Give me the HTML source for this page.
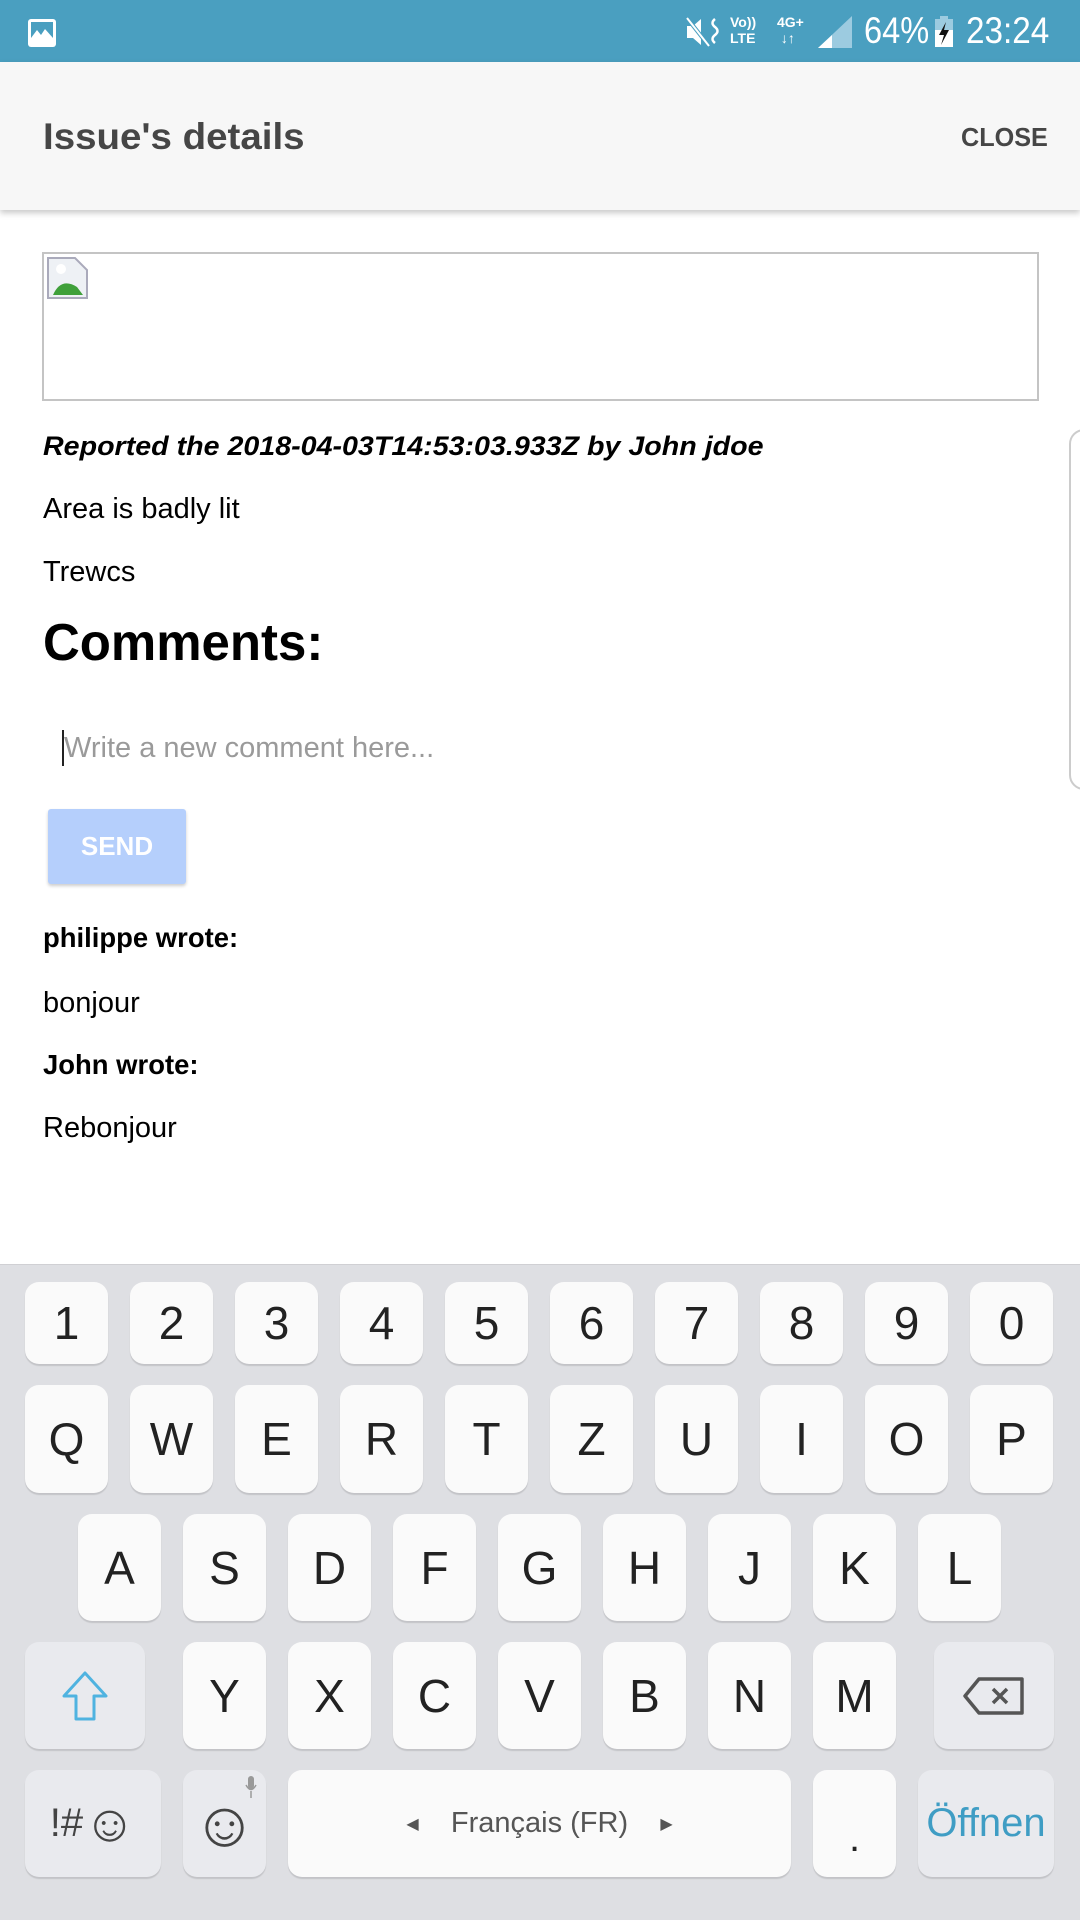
<!DOCTYPE html>
<html><head><meta charset="utf-8"><style>
*{margin:0;padding:0;box-sizing:border-box}
body{width:1080px;height:1920px;position:relative;overflow:hidden;background:#fff;font-family:"Liberation Sans",sans-serif;color:#000}
.a{position:absolute;white-space:nowrap}
.sb{position:absolute;left:0;top:0;width:1080px;height:62px;background:#4a9fc0;color:#fff}
.ab{position:absolute;left:0;top:62px;width:1080px;height:148px;background:#f7f7f7;box-shadow:0 3px 6px rgba(0,0,0,.22)}
.kb{position:absolute;left:0;top:1264px;width:1080px;height:656px;background:#dedfe3;border-top:1px solid #d0d0d4}
.k{position:absolute;background:#fafafa;border-radius:14px;box-shadow:0 2px 1px rgba(0,0,0,.12);display:flex;align-items:center;justify-content:center;font-size:46px;color:#222}
.s{background:#e9eaee}
</style></head><body>
<div class="sb">
 <svg class="a" style="left:27px;top:18px" width="30" height="30" viewBox="0 0 30 30"><rect x="1" y="1" width="28" height="28" rx="3" fill="#fff"/><rect x="4" y="4" width="22" height="16" fill="#4a9fc0"/><path d="M4 20 L10 12 L14 17 L18 11 L26 20Z" fill="#fff"/></svg>
 <svg class="a" style="left:685px;top:16px" width="38" height="32" viewBox="0 0 38 32"><path d="M2 10h6l8-7v26l-8-7H2z" fill="#fff"/><path d="M2 2 L24 30" stroke="#4a9fc0" stroke-width="4"/><path d="M2 2 L24 30" stroke="#fff" stroke-width="2"/><path d="M30 3 q-5 4 0 8 q5 4 0 8 q-5 4 0 8" stroke="#fff" stroke-width="2.5" fill="none"/></svg>
 <div class="a" style="left:730px;top:14px;font-size:14px;font-weight:bold;line-height:16px">Vo))<br>LTE</div>
 <div class="a" style="left:777px;top:14px;font-size:14px;font-weight:bold;line-height:16px">4G+<br>&nbsp;↓↑</div>
 <svg class="a" style="left:818px;top:16px" width="34" height="32" viewBox="0 0 34 32"><path d="M0 32 L34 0 V32Z" fill="#9ccbe0"/><path d="M0 32 L14 19 V32Z" fill="#fff"/></svg>
 <div class="a" style="left:864px;top:10px;font-size:37px;line-height:42px;transform:scaleX(.88);transform-origin:left">64%</div>
 <svg class="a" style="left:934px;top:16px" width="20" height="32" viewBox="0 0 20 32"><rect x="6" y="0" width="8" height="4" fill="#9ccbe0"/><rect x="1" y="3" width="18" height="28" fill="#9ccbe0"/><rect x="1" y="14" width="18" height="17" fill="#fff"/><path d="M12 6 L5 19 H10 L7 29 L15 14 H10Z" fill="#111"/></svg>
 <div class="a" style="left:966px;top:10px;font-size:37px;line-height:42px;transform:scaleX(.9);transform-origin:left">23:24</div>
</div>
<div class="ab">
 <div class="a" style="left:43px;top:54px;font-size:37px;font-weight:bold;color:#464646;line-height:42px;transform:scaleX(1.04);transform-origin:left">Issue's details</div>
 <div class="a" style="left:961px;top:60px;font-size:26px;font-weight:bold;color:#464646;line-height:30px;transform:scaleX(.97);transform-origin:left">CLOSE</div>
</div>
<div class="a" style="left:42px;top:252px;width:997px;height:149px;border:2px solid #c4c4c4"></div>
<svg class="a" style="left:47px;top:257px" width="42" height="42" viewBox="0 0 42 42"><path d="M1 1 H28 L40 13 V41 H1Z" fill="#eef1f5" stroke="#aab" stroke-width="2"/><path d="M6 38 Q14 20 30 30 L36 38Z" fill="#3fa03a"/><circle cx="14" cy="12" r="5" fill="#fff"/></svg>
<div class="a" style="left:43px;top:430px;font-size:27px;font-weight:bold;font-style:italic;line-height:32px;transform:scaleX(1.06);transform-origin:left">Reported the 2018-04-03T14:53:03.933Z by John jdoe</div>
<div class="a" style="left:43px;top:492px;font-size:29px;line-height:34px;transform:scaleX(1.0);transform-origin:left">Area is badly lit</div>
<div class="a" style="left:43px;top:555px;font-size:29px;line-height:34px">Trewcs</div>
<div class="a" style="left:43px;top:613px;font-size:52px;font-weight:bold;line-height:60px;transform:scaleX(.98);transform-origin:left">Comments:</div>
<div class="a" style="left:62px;top:730px;width:2px;height:36px;background:#222"></div>
<div class="a" style="left:64px;top:731px;font-size:29px;color:#9a9a9a;line-height:34px">Write a new comment here...</div>
<div class="a" style="left:48px;top:809px;width:138px;height:75px;background:#b5cffc;border-radius:3px;box-shadow:0 2px 3px rgba(0,0,0,.2);color:#fff;font-size:26px;font-weight:bold;display:flex;align-items:center;justify-content:center">SEND</div>
<div class="a" style="left:1069px;top:429px;width:30px;height:361px;border:2px solid #ccc;border-radius:16px"></div>
<div class="a" style="left:43px;top:921px;font-size:28px;font-weight:bold;line-height:34px;transform:scaleX(.98);transform-origin:left">philippe wrote:</div>
<div class="a" style="left:43px;top:986px;font-size:29px;line-height:34px">bonjour</div>
<div class="a" style="left:43px;top:1048px;font-size:28px;font-weight:bold;line-height:34px;transform:scaleX(.98);transform-origin:left">John wrote:</div>
<div class="a" style="left:43px;top:1111px;font-size:29px;line-height:34px">Rebonjour</div>
<div class="kb"></div>
<div class="k" style="left:25px;top:1282px;width:83px;height:82px">1</div>
<div class="k" style="left:130px;top:1282px;width:83px;height:82px">2</div>
<div class="k" style="left:235px;top:1282px;width:83px;height:82px">3</div>
<div class="k" style="left:340px;top:1282px;width:83px;height:82px">4</div>
<div class="k" style="left:445px;top:1282px;width:83px;height:82px">5</div>
<div class="k" style="left:550px;top:1282px;width:83px;height:82px">6</div>
<div class="k" style="left:655px;top:1282px;width:83px;height:82px">7</div>
<div class="k" style="left:760px;top:1282px;width:83px;height:82px">8</div>
<div class="k" style="left:865px;top:1282px;width:83px;height:82px">9</div>
<div class="k" style="left:970px;top:1282px;width:83px;height:82px">0</div>
<div class="k" style="left:25px;top:1385px;width:83px;height:108px">Q</div>
<div class="k" style="left:130px;top:1385px;width:83px;height:108px">W</div>
<div class="k" style="left:235px;top:1385px;width:83px;height:108px">E</div>
<div class="k" style="left:340px;top:1385px;width:83px;height:108px">R</div>
<div class="k" style="left:445px;top:1385px;width:83px;height:108px">T</div>
<div class="k" style="left:550px;top:1385px;width:83px;height:108px">Z</div>
<div class="k" style="left:655px;top:1385px;width:83px;height:108px">U</div>
<div class="k" style="left:760px;top:1385px;width:83px;height:108px">I</div>
<div class="k" style="left:865px;top:1385px;width:83px;height:108px">O</div>
<div class="k" style="left:970px;top:1385px;width:83px;height:108px">P</div>
<div class="k" style="left:78px;top:1514px;width:83px;height:107px">A</div>
<div class="k" style="left:183px;top:1514px;width:83px;height:107px">S</div>
<div class="k" style="left:288px;top:1514px;width:83px;height:107px">D</div>
<div class="k" style="left:393px;top:1514px;width:83px;height:107px">F</div>
<div class="k" style="left:498px;top:1514px;width:83px;height:107px">G</div>
<div class="k" style="left:603px;top:1514px;width:83px;height:107px">H</div>
<div class="k" style="left:708px;top:1514px;width:83px;height:107px">J</div>
<div class="k" style="left:813px;top:1514px;width:83px;height:107px">K</div>
<div class="k" style="left:918px;top:1514px;width:83px;height:107px">L</div>
<div class="k s" style="left:25px;top:1642px;width:120px;height:107px"><svg width="48" height="52" viewBox="0 0 48 52"><path d="M24 3 L45 26 H33 V49 H15 V26 H3Z" fill="none" stroke="#4fb3e0" stroke-width="3" stroke-linejoin="round"/></svg></div>
<div class="k" style="left:183px;top:1642px;width:83px;height:107px">Y</div>
<div class="k" style="left:288px;top:1642px;width:83px;height:107px">X</div>
<div class="k" style="left:393px;top:1642px;width:83px;height:107px">C</div>
<div class="k" style="left:498px;top:1642px;width:83px;height:107px">V</div>
<div class="k" style="left:603px;top:1642px;width:83px;height:107px">B</div>
<div class="k" style="left:708px;top:1642px;width:83px;height:107px">N</div>
<div class="k" style="left:813px;top:1642px;width:83px;height:107px">M</div>
<div class="k s" style="left:934px;top:1642px;width:120px;height:107px"><svg width="62" height="38" viewBox="0 0 62 38"><path d="M16 2 H59 V36 H16 L2 19Z" fill="none" stroke="#555" stroke-width="3.5" stroke-linejoin="round"/><path d="M30 12 L44 26 M44 12 L30 26" stroke="#555" stroke-width="3.5"/></svg></div>
<div class="k s" style="left:25px;top:1770px;width:136px;height:107px;font-size:40px;color:#444">!#<span style="font-size:52px">&#9786;</span></div>
<div class="k s" style="left:183px;top:1770px;width:83px;height:107px;font-size:64px;color:#444">&#9786;<svg class="a" style="left:62px;top:6px" width="12" height="24" viewBox="0 0 12 24"><rect x="3" y="0" width="6" height="13" rx="3" fill="#999"/><path d="M1 9 q5 9 10 0 M6 15 V22" stroke="#999" stroke-width="1.5" fill="none"/></svg></div>
<div class="k" style="left:288px;top:1770px;width:503px;height:107px;font-size:29px;color:#555"><span style="font-size:16px">&#9664;</span>&nbsp;&nbsp;&nbsp; Français (FR) &nbsp;&nbsp;&nbsp;<span style="font-size:16px">&#9654;</span></div>
<div class="k" style="left:813px;top:1770px;width:83px;height:107px;font-size:40px;padding-top:30px">.</div>
<div class="k s" style="left:918px;top:1770px;width:136px;height:107px;font-size:40px;color:#3f9dc4">Öffnen</div>
</body></html>
